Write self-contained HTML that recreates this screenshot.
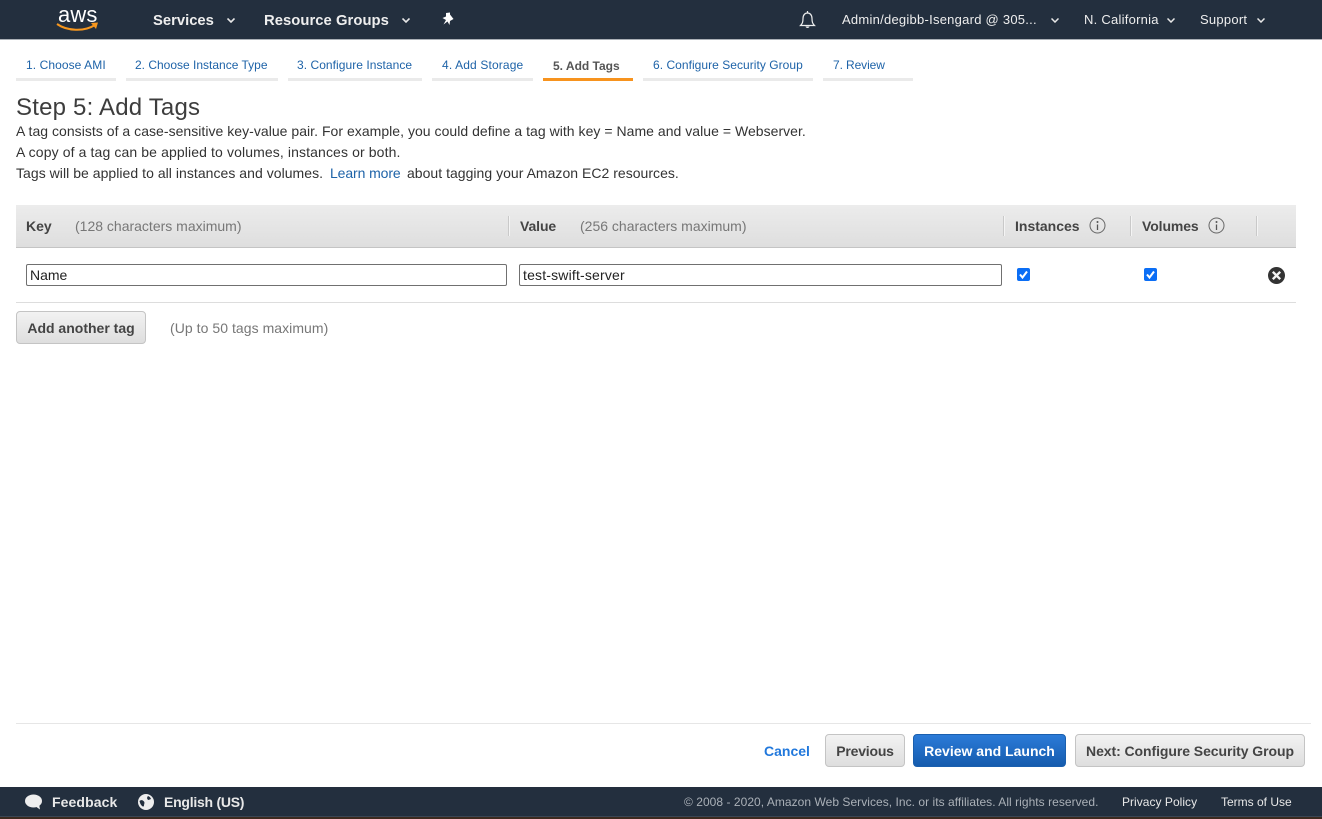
<!DOCTYPE html>
<html><head><meta charset="utf-8"><title>Step 5: Add Tags</title>
<style>
html,body{margin:0;padding:0;background:#fff}
body{position:relative;width:1322px;height:819px;overflow:hidden;font-family:"Liberation Sans",Arial,sans-serif;color:#333}
.a{position:absolute;white-space:nowrap}
.n{font-size:14.8px;font-weight:700;color:#eee;line-height:16px}
.r{font-size:13px;color:#eee;line-height:14px;letter-spacing:.25px}
.t{font-size:12px;color:#1e63a8;line-height:14px;top:58px}
.u{position:absolute;top:78px;height:3px;background:#eaeaea}
.b{font-size:14px;color:#333;line-height:16px}
.hd{font-size:14px;font-weight:700;color:#444;line-height:16px;top:218px}
.g{font-size:14px;color:#777;line-height:16px}
.sep{position:absolute;top:216px;width:1px;height:20px;background:#c9c9c9;border-right:1px solid #f4f4f4}
.inp{position:absolute;top:264px;height:20px;border:1px solid #707070;border-radius:2px;background:#fff;font-size:14px;line-height:20px;padding-left:3px;box-sizing:content-box;color:#222}
.btn{position:absolute;top:734px;height:33px;box-sizing:border-box;border:1px solid #c4c4c4;border-radius:4px;background:linear-gradient(#f2f2f2,#dedede);font-size:14px;font-weight:700;color:#444;line-height:32px;text-align:center;white-space:nowrap}
.f{font-size:12px;line-height:14px;top:795px;color:#e8e8e8}
</style></head>
<body>
<div class="a" style="left:0;top:0;width:1322px;height:39px;background:#232f3e;border-bottom:1px solid #aab0b6"></div>
<div class="a" style="left:58px;top:2px;font-size:22px;line-height:26px;color:#fff;letter-spacing:.1px">aws</div>
<svg class="a" style="left:56px;top:21px" width="44" height="12" viewBox="0 0 44 12"><path d="M1 3C11 10 28 11 39 4" fill="none" stroke="#f7971e" stroke-width="2"/><path d="M35 2L42 1.500L40 8Z" fill="#f7971e"/></svg>
<div class="a n" style="left:153px;top:13px">Services</div>
<svg class="a" style="left:227px;top:18px" width="8" height="5"><path d="M.5 .5L4 4L7.500 .5" fill="none" stroke="#e8e8e8" stroke-width="1.600"/></svg>
<div class="a n" style="left:264px;top:13px;letter-spacing:.05px">Resource Groups</div>
<svg class="a" style="left:402px;top:18px" width="8" height="5"><path d="M.5 .5L4 4L7.500 .5" fill="none" stroke="#e8e8e8" stroke-width="1.600"/></svg>
<svg class="a" style="left:441px;top:12px" width="14" height="14" viewBox="0 0 14 14"><path d="M5 1L9 .5L9 2.500L12.500 7L9 9L8.500 13L6.500 9.500L2.500 12.500L5 8L1.500 6L5 4.500Z" fill="#fff"/></svg>
<svg class="a" style="left:798px;top:10px" width="20" height="20" viewBox="0 0 20 20"><path d="M2.500 15.500C4.500 13.500 5 12 5 8.500C5 5 7 3 9.500 3C12 3 14 5 14 8.500C14 12 14.500 13.500 16.500 15.500Z" fill="none" stroke="#eee" stroke-width="1.200"/><path d="M9.500 1L9.500 3" stroke="#eee" stroke-width="1.200"/><path d="M7.500 16.500C8 18.500 11 18.500 11.500 16.500Z" fill="#eee"/></svg>
<div class="a r" style="left:842px;top:13px">Admin/degibb-Isengard @ 305...</div>
<svg class="a" style="left:1051px;top:18px" width="8" height="5"><path d="M.5 .5L4 4L7.500 .5" fill="none" stroke="#e8e8e8" stroke-width="1.500"/></svg>
<div class="a r" style="left:1084px;top:13px">N. California</div>
<svg class="a" style="left:1167px;top:18px" width="8" height="5"><path d="M.5 .5L4 4L7.500 .5" fill="none" stroke="#e8e8e8" stroke-width="1.500"/></svg>
<div class="a r" style="left:1200px;top:13px">Support</div>
<svg class="a" style="left:1257px;top:18px" width="8" height="5"><path d="M.5 .5L4 4L7.500 .5" fill="none" stroke="#e8e8e8" stroke-width="1.500"/></svg>

<div class="a t" style="left:26px;letter-spacing:.08px">1. Choose AMI</div><div class="u" style="left:16px;width:100px"></div>
<div class="a t" style="left:135px">2. Choose Instance Type</div><div class="u" style="left:126px;width:152px"></div>
<div class="a t" style="left:297px;letter-spacing:.05px">3. Configure Instance</div><div class="u" style="left:288px;width:134px"></div>
<div class="a t" style="left:442px;letter-spacing:.14px">4. Add Storage</div><div class="u" style="left:432px;width:101px"></div>
<div class="a t" style="left:553px;top:59px;font-weight:700;color:#555">5. Add Tags</div><div class="u" style="left:543px;width:90px;background:#f7931e"></div>
<div class="a t" style="left:653px;letter-spacing:.04px">6. Configure Security Group</div><div class="u" style="left:643px;width:170px"></div>
<div class="a t" style="left:833px;letter-spacing:-.1px">7. Review</div><div class="u" style="left:823px;width:90px"></div>

<div class="a" style="left:16px;top:94px;font-size:24px;line-height:28px;color:#3d3d3d;letter-spacing:.2px">Step 5: Add Tags</div>
<div class="a b" style="left:16px;top:123px;letter-spacing:.033px">A tag consists of a case-sensitive key-value pair. For example, you could define a tag with key = Name and value = Webserver.</div>
<div class="a b" style="left:16px;top:144px;letter-spacing:.115px">A copy of a tag can be applied to volumes, instances or both.</div>
<div class="a b" style="left:16px;top:165px;letter-spacing:.04px">Tags will be applied to all instances and volumes.</div>
<div class="a b" style="left:330px;top:165px;color:#1e63a8;letter-spacing:-.1px">Learn more</div>
<div class="a b" style="left:407px;top:165px;letter-spacing:.025px">about tagging your Amazon EC2 resources.</div>

<div class="a" style="left:16px;top:205px;width:1280px;height:43px;box-sizing:border-box;background:linear-gradient(#ececec,#dedede);border-bottom:1px solid #c4c4c4"></div>
<div class="a hd" style="left:26px">Key</div>
<div class="a g" style="left:75px;top:218px">(128 characters maximum)</div>
<div class="sep" style="left:508px"></div>
<div class="a hd" style="left:520px;letter-spacing:-.1px">Value</div>
<div class="a g" style="left:580px;top:218px">(256 characters maximum)</div>
<div class="sep" style="left:1003px"></div>
<div class="a hd" style="left:1015px">Instances</div>
<svg class="a" style="left:1089px;top:217px" width="17" height="17"><circle cx="8.500" cy="8.500" r="7.500" fill="none" stroke="#666" stroke-width="1"/><path d="M8.500 7.500V13" stroke="#555" stroke-width="1.300"/><circle cx="8.500" cy="5" r="1" fill="#555"/></svg>
<div class="sep" style="left:1130px"></div>
<div class="a hd" style="left:1142px;letter-spacing:-.1px">Volumes</div>
<svg class="a" style="left:1208px;top:217px" width="17" height="17"><circle cx="8.500" cy="8.500" r="7.500" fill="none" stroke="#666" stroke-width="1"/><path d="M8.500 7.500V13" stroke="#555" stroke-width="1.300"/><circle cx="8.500" cy="5" r="1" fill="#555"/></svg>
<div class="sep" style="left:1256px"></div>

<div class="inp" style="left:26px;width:476px">Name</div>
<div class="inp" style="left:519px;width:478px;letter-spacing:.18px">test-swift-server</div>
<svg class="a" style="left:1017px;top:268px" width="13" height="13"><rect width="13" height="13" rx="2" fill="#0b6ef5"/><path d="M3 6.500L5.500 9.500L10 3.500" fill="none" stroke="#fff" stroke-width="2"/></svg>
<svg class="a" style="left:1144px;top:268px" width="13" height="13"><rect width="13" height="13" rx="2" fill="#0b6ef5"/><path d="M3 6.500L5.500 9.500L10 3.500" fill="none" stroke="#fff" stroke-width="2"/></svg>
<svg class="a" style="left:1268px;top:267px" width="17" height="17"><circle cx="8.500" cy="8.500" r="8.500" fill="#333"/><path d="M4.800 4.800L12.200 12.200M12.200 4.800L4.800 12.200" stroke="#f4f4f4" stroke-width="2.400"/></svg>
<div class="a" style="left:16px;top:302px;width:1280px;height:1px;background:#ddd"></div>

<div class="btn" style="left:16px;top:311px;width:130px">Add another tag</div>
<div class="a g" style="left:170px;top:320px;letter-spacing:.05px">(Up to 50 tags maximum)</div>

<div class="a" style="left:16px;top:723px;width:1295px;height:1px;background:#e6e6e6"></div>
<div class="a" style="left:764px;top:743px;font-size:14px;font-weight:700;line-height:16px;color:#2178dc">Cancel</div>
<div class="btn" style="left:825px;width:80px;letter-spacing:-.2px">Previous</div>
<div class="btn" style="left:913px;width:153px;background:linear-gradient(#2b7bd8,#155cae);border-color:#1a5fae;color:#fff">Review and Launch</div>
<div class="btn" style="left:1075px;width:230px;letter-spacing:-.07px">Next: Configure Security Group</div>

<div class="a" style="left:0;top:787px;width:1322px;height:29px;background:#232f3e;border-bottom:1px solid #3a4654"></div>
<div class="a" style="left:0;top:817px;width:1322px;height:2px;background:#3d2a1f"></div>
<svg class="a" style="left:24px;top:794px" width="19" height="16" viewBox="0 0 19 16"><ellipse cx="9.500" cy="7" rx="8.500" ry="6.500" fill="#eee"/><path d="M11 12L16 15.500L15 10Z" fill="#eee"/></svg>
<div class="a n" style="left:52px;top:794px;color:#e8e8e8;font-size:14px;letter-spacing:.1px">Feedback</div>
<svg class="a" style="left:138px;top:794px" width="16" height="16" viewBox="0 0 16 16"><circle cx="8" cy="8" r="8" fill="#eee"/><path d="M1.500 7C3 5.500 5 6 6 7.500C7 9 6 10 6 11.500C6 12.500 5 13 4 12C2.500 10.500 2 9 1.500 7ZM10 2C11.500 2.500 12.500 3.500 13 5L10.500 6C9 5.500 8.500 3.500 10 2Z" fill="#232f3e"/></svg>
<div class="a n" style="left:164px;top:794px;color:#e8e8e8;font-size:14px;letter-spacing:-.25px">English (US)</div>
<div class="a f" style="left:684px;color:#aab0b7;letter-spacing:.04px">© 2008 - 2020, Amazon Web Services, Inc. or its affiliates. All rights reserved.</div>
<div class="a f" style="left:1122px;letter-spacing:.03px">Privacy Policy</div>
<div class="a f" style="left:1221px">Terms of Use</div>
</body></html>
